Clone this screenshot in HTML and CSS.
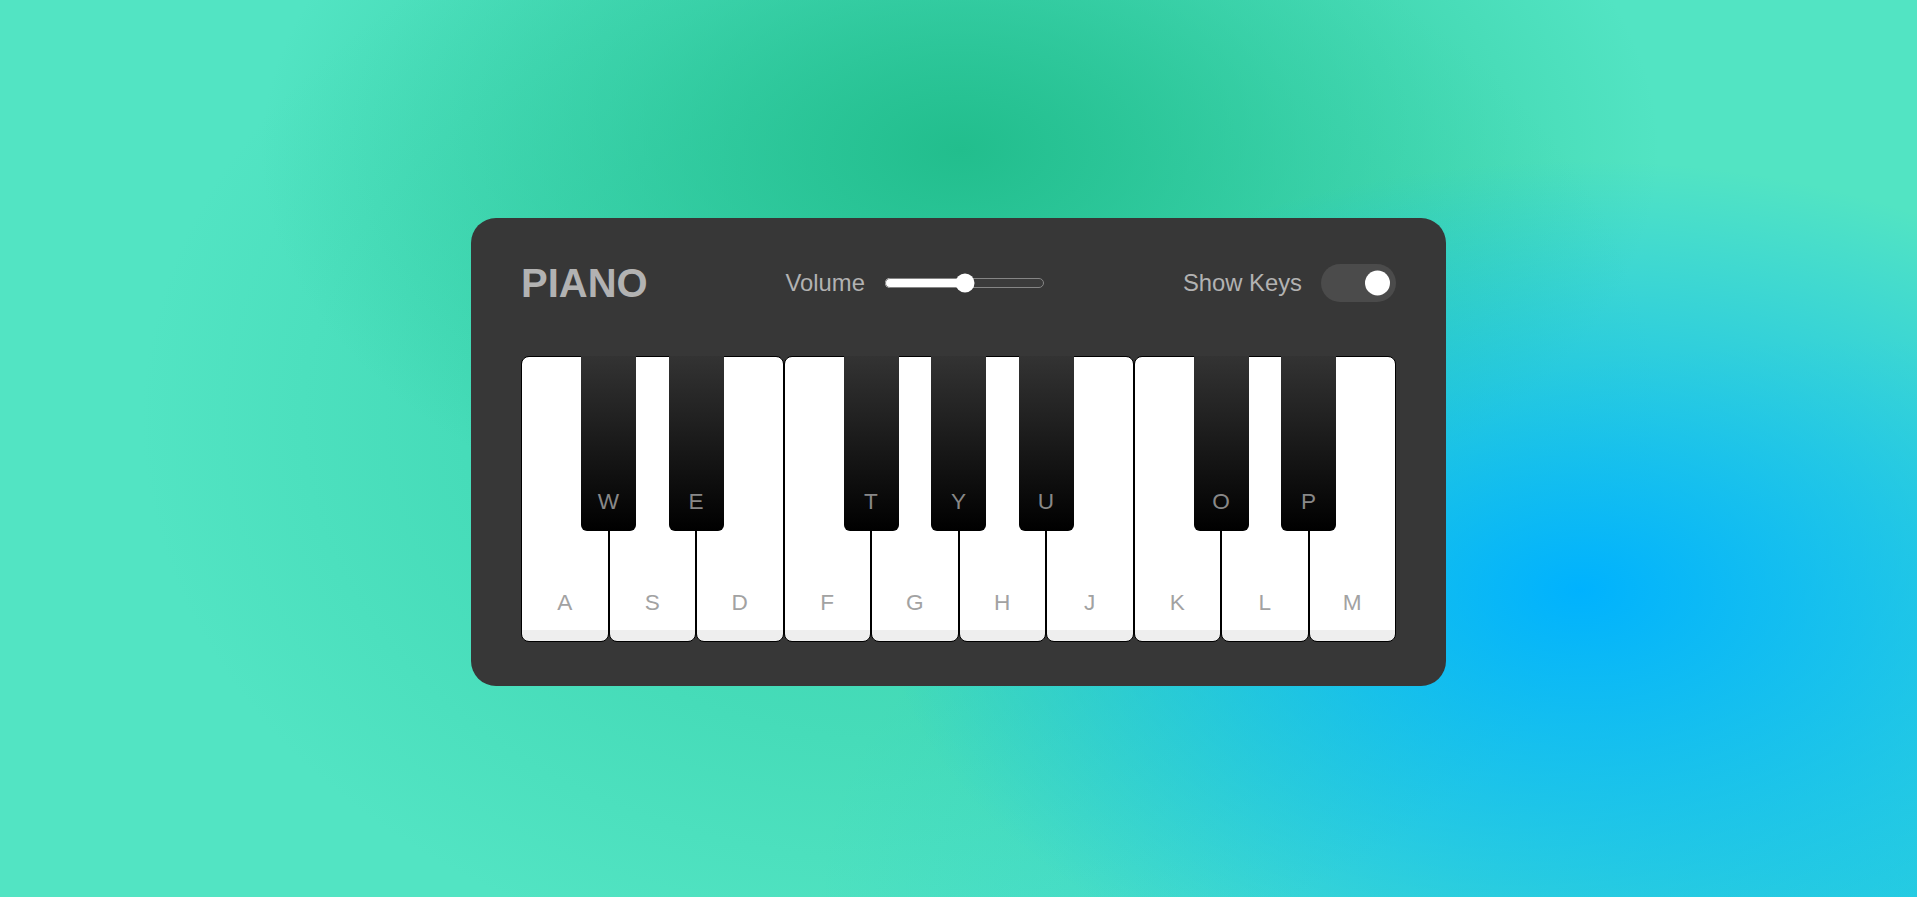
FILE: index.html
```html
<!DOCTYPE html>
<html lang="en">
<head>
<meta charset="utf-8">
<title>Piano</title>
<link rel="stylesheet" href="styles.css">
</head>
<body>
<main class="stage">
  <div class="wrapper">
    <header class="top">
      <h2 class="title">PIANO</h2>
      <div class="column volume-slider">
        <span class="label">Volume</span>
        <input class="range" type="range" min="0" max="1" value="0.5" step="any">
      </div>
      <div class="column keys-checkbox">
        <span class="label">Show Keys</span>
        <input class="toggle" type="checkbox" checked>
      </div>
    </header>
    <ul class="piano-keys">
      <li class="key white"><span>a</span></li>
      <li class="key black"><span>w</span></li>
      <li class="key white"><span>s</span></li>
      <li class="key black"><span>e</span></li>
      <li class="key white"><span>d</span></li>
      <li class="key white"><span>f</span></li>
      <li class="key black"><span>t</span></li>
      <li class="key white"><span>g</span></li>
      <li class="key black"><span>y</span></li>
      <li class="key white"><span>h</span></li>
      <li class="key black"><span>u</span></li>
      <li class="key white"><span>j</span></li>
      <li class="key white"><span>k</span></li>
      <li class="key black"><span>o</span></li>
      <li class="key white"><span>l</span></li>
      <li class="key black"><span>p</span></li>
      <li class="key white"><span>m</span></li>
    </ul>
  </div>
</main>
</body>
</html>
```
FILE: styles.css
```css
* {
  margin: 0;
  padding: 0;
  box-sizing: border-box;
}

html, body {
  height: 100%;
}

body {
  font-family: "Liberation Sans", Arial, sans-serif;
  background:
    radial-gradient(ellipse 700px 430px at 1580px 590px, rgba(0, 178, 254, 1) 0%, rgba(0, 178, 254, 0.7) 30%, rgba(0, 178, 254, 0) 100%),
    radial-gradient(ellipse 700px 420px at 960px 150px, rgba(34, 190, 141, 1) 0%, rgba(34, 190, 141, 0.45) 50%, rgba(34, 190, 141, 0) 100%),
    radial-gradient(ellipse 760px 560px at 900px 420px, rgba(40, 200, 160, 0.55) 0%, rgba(40, 200, 160, 0.3) 55%, rgba(40, 200, 160, 0) 100%),
    radial-gradient(ellipse 1100px 560px at 1917px 897px, rgba(30, 200, 230, 0.75) 0%, rgba(30, 200, 230, 0) 100%),
    #52e4c3;
  overflow: hidden;
}

.stage {
  min-height: 100vh;
  display: flex;
  align-items: center;
  justify-content: center;
  padding-top: 6px;
}

.wrapper {
  width: 975px;
  padding: 43px 50px 44px;
  border-radius: 25px;
  background: #373737;
}

.top {
  display: flex;
  align-items: center;
  justify-content: space-between;
  color: #b2b2b2;
}

.title {
  font-size: 40px;
  font-weight: 700;
  line-height: 45px;
}

.column {
  display: flex;
  align-items: center;
}

.label {
  font-size: 23.8px;
  margin-right: 19px;
}

.range {
  zoom: 1.25;
  accent-color: #fff;
  outline: none;
}

.toggle {
  appearance: none;
  -webkit-appearance: none;
  width: 75px;
  height: 37.5px;
  border-radius: 37.5px;
  background: #4b4b4b;
  position: relative;
  outline: none;
  border: none;
}

.toggle::before {
  content: "";
  position: absolute;
  top: 50%;
  left: 6.25px;
  width: 25px;
  height: 25px;
  border-radius: 50%;
  background: #8c8c8c;
  transform: translateY(-50%);
}

.toggle:checked::before {
  left: 43.75px;
  background: #fff;
}

.piano-keys {
  display: flex;
  list-style: none;
  margin-top: 50px;
}

.key {
  position: relative;
  text-transform: uppercase;
  list-style: none;
}

.key span {
  position: absolute;
  left: 0;
  width: 100%;
  text-align: center;
  font-size: 22.6px;
}

.white {
  width: 87.5px;
  height: 286px;
  border-radius: 8px;
  border: 1px solid #000;
  background: linear-gradient(#fff 96%, #eee 4%);
}

.white span {
  bottom: 25px;
  color: #a2a2a2;
}

.black {
  z-index: 2;
  width: 55px;
  height: 175px;
  margin: 0 -27.5px;
  border-radius: 0 0 6px 6px;
  background: linear-gradient(#333, #000);
}

.black span {
  bottom: 16px;
  color: #888;
}
```
